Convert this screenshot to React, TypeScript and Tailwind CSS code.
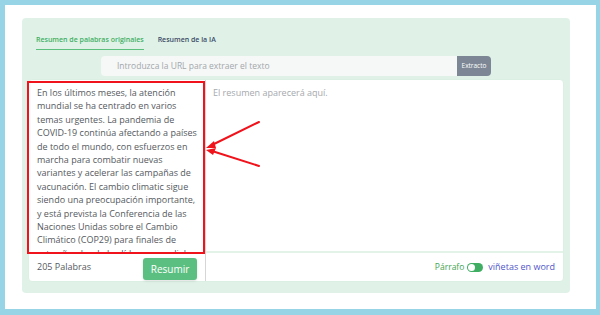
import React from 'react';

const lines = [
  'En los últimos meses, la atención',
  'mundial se ha centrado en varios',
  'temas urgentes. La pandemia de',
  'COVID-19 continúa afectando a países',
  'de todo el mundo, con esfuerzos en',
  'marcha para combatir nuevas',
  'variantes y acelerar las campañas de',
  'vacunación. El cambio climatic sigue',
  'siendo una preocupación importante,',
  'y está prevista la Conferencia de las',
  'Naciones Unidas sobre el Cambio',
  'Climático (COP29) para finales de',
  'este año, donde los líderes mundiales',
];

export default function App() {
  return (
    <div className="w-[600px] h-[315px] bg-[#97d5e6] pt-[5px] pl-[5px] pr-[4px] pb-[6px] font-['Open_Sans',sans-serif]">
      <div className="relative h-full bg-white pl-[17px] pt-[13px]">
        {/* green panel */}
        <div className="w-[548px] h-[275px] bg-[#e0f2e7] rounded-[4px] flex flex-col">
          {/* tabs */}
          <div className="flex items-end gap-[14px] pl-[14px] h-[32px]">
            <div className="text-[7px] font-semibold text-[#3fae62] pb-[4px] border-b-[1.5px] border-[#5cbf7c]">
              Resumen de palabras originales
            </div>
            <div className="text-[7px] font-semibold text-[#3c4a66] pb-[5px]">Resumen de la IA</div>
          </div>

          {/* url row */}
          <div className="flex justify-center mt-[6px]">
            <div className="w-[356px] h-[20px] bg-[#f6f8f7] rounded-l-[4px] flex items-center pl-[16px] text-[8.5px] text-[#a3a7ab]">
              Introduzca la URL para extraer el texto
            </div>
            <div className="w-[34px] h-[20px] bg-[#7c8694] rounded-r-[4px] flex items-center justify-center text-[6.5px] text-white">
              Extracto
            </div>
          </div>

          {/* card */}
          <div className="mx-[6px] mt-[3px] h-[203px] bg-white rounded-[4px] border border-[#dbefe2] flex">
            {/* left column */}
            <div className="w-[177px] flex flex-col border-r border-[#d6d6d6]">
              <div className="h-[173px] pl-[8px] pt-[6px] overflow-hidden text-[9px] leading-[13.4px] text-[#55595e] whitespace-nowrap">
                {lines.map((l) => (
                  <div key={l}>{l}</div>
                ))}
              </div>
              <div className="flex-1 flex items-start justify-between pl-[8px] pr-[8px] pt-[5px]">
                <span className="text-[9px] text-[#55595e] mt-[2px]">205 Palabras</span>
                <button className="w-[54px] h-[22px] bg-[#5cbf82] rounded-[3px] text-white text-[10px] shadow-sm">
                  Resumir
                </button>
              </div>
            </div>

            {/* right column */}
            <div className="flex-1 flex flex-col">
              <div className="h-[173px] border-b-2 border-[#e3f3e8] pl-[7px] pt-[6px] text-[9px] text-[#a6a9ad]">
                El resumen aparecerá aquí.
              </div>
              <div className="flex-1 flex items-center justify-end pr-[8px] gap-[3px] text-[8.5px]">
                <span className="text-[#3fa552]">Párrafo</span>
                <span className="w-[16px] h-[9px] rounded-full bg-[#3fae62] relative inline-block">
                  <span className="absolute left-[1px] top-[1px] w-[7px] h-[7px] rounded-full bg-white"></span>
                </span>
                <span className="text-[#5055c8] ml-[2px] text-[9px]">viñetas en word</span>
              </div>
            </div>
          </div>
        </div>

        {/* red highlight box */}
        <div className="absolute left-[22px] top-[76px] w-[178px] h-[173px] border-2 border-[#f0131b] pointer-events-none"></div>

        {/* arrows */}
        <svg className="absolute left-0 top-0 pointer-events-none" width="591" height="304" viewBox="5 5 591 304">
          <g stroke="#f0131b" strokeWidth="2" fill="#f0131b" strokeLinecap="round">
            <line x1="259" y1="122" x2="212" y2="145" />
            <line x1="259" y1="166" x2="212" y2="151" />
          </g>
          <polygon points="206,148 214,141 216,148" fill="#f0131b" />
          <polygon points="206,150 216,148 213,155" fill="#f0131b" />
        </svg>
      </div>
    </div>
  );
}
